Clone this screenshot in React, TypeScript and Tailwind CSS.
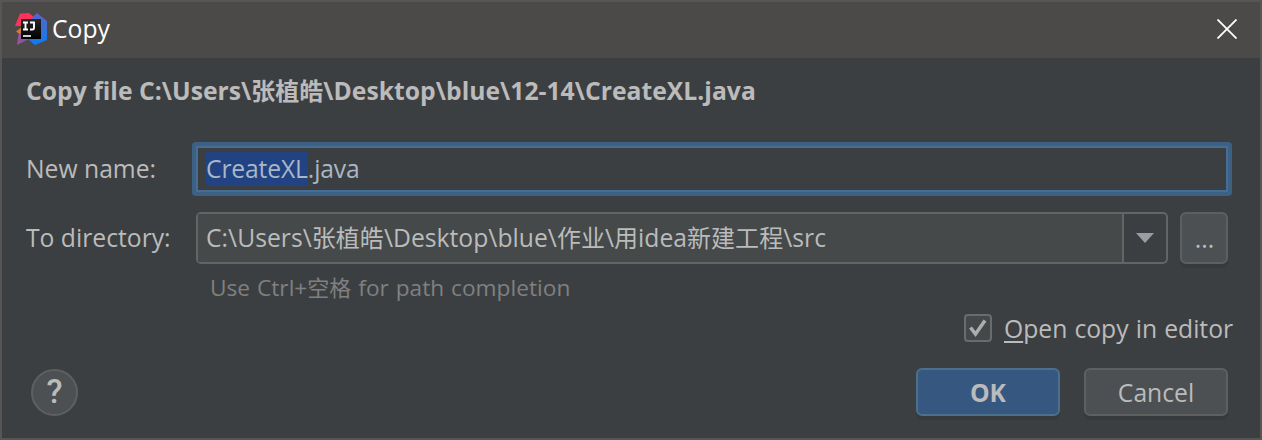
import React from "react";

const Logo = () => (
  <svg width="32" height="32" viewBox="0 0 32 32" className="shrink-0">
    <defs>
      <linearGradient id="blue" x1="0" y1="0" x2="0" y2="1">
        <stop offset="0" stopColor="#5a62cc" />
        <stop offset="0.45" stopColor="#3b70d2" />
        <stop offset="1" stopColor="#087cfa" />
      </linearGradient>
      <linearGradient id="violet" x1="0" y1="0" x2="1" y2="0">
        <stop offset="0" stopColor="#a0509a" />
        <stop offset="1" stopColor="#6a5fae" />
      </linearGradient>
      <linearGradient id="black" x1="0" y1="0" x2="0" y2="1">
        <stop offset="0" stopColor="#262626" />
        <stop offset="1" stopColor="#000" />
      </linearGradient>
    </defs>
    <path d="M7 14 1 18.500l6 4.500Z" fill="#d9772c" />
    <path d="M3.500 21 2 32l13-6.500V16Z" fill="url(#violet)" />
    <path d="M5 .5 14 0l6 5v8H0Z" fill="#fe315d" />
    <path d="M22 0 32 8v19l-12 5-6-5V8Z" fill="url(#blue)" />
    <rect x="6" y="6" width="20" height="20" fill="url(#black)" />
    <path d="M8 9.500h5M10.500 9.500v7M8 16.500h5M15 9.500h4v5.200q0 1.800-1.800 1.800H15" stroke="#fff" strokeWidth="1.900" fill="none" />
    <path d="M8 23h8" stroke="#fff" strokeWidth="1.600" />
  </svg>
);

const App = () => (
  <main className="flex h-[440px] w-[1262px] flex-col border-2 border-[#575654] bg-[#3c3f41] font-['Open_Sans','Noto_Sans_CJK_SC',sans-serif] text-[24.700px] leading-[32px] whitespace-nowrap text-[#bbbbbb]">
    <header className="flex h-[56px] shrink-0 items-center bg-[#4b4a48] pr-[23px] pb-[2px] pl-[13px]">
      <Logo />
      <h1 className="ml-[5px] text-white">Copy</h1>
      <svg width="20" height="20" viewBox="0 0 20 20" className="ml-auto" stroke="#fff" strokeWidth="1.800">
        <path d="M.5.500 19.500 19.500M19.500.500.500 19.500" />
      </svg>
    </header>
    <p className="mt-[17px] ml-[24px] h-[32px] font-bold tracking-[0.020px]">
      Copy file C:\Users\<span className="text-[24px]">张植皓</span>\Desktop\blue\12-14\CreateXL.java
    </p>
    <div className="mt-[35px] flex h-[54px] shrink-0 items-center pl-[24px]">
      <label className="w-[166px]">New name:</label>
      <div className="h-[54px] w-[1040px] rounded-[4px] bg-[#3d6185] p-[4px]">
        <div className="flex h-[46px] items-center border-2 border-[#466d94] bg-[#3c3f41] pl-[8px] tracking-[-0.150px] text-[#a9b7c6]">
          <span className="flex h-[34px] items-center bg-[#214283]">CreateXL</span>
          <span>.java</span>
        </div>
      </div>
    </div>
    <div className="mt-[16px] flex h-[52px] shrink-0 items-center pl-[24px]">
      <label className="w-[170px] pb-[1px]">To directory:</label>
      <div className="flex h-[52px] w-[972px] rounded-[5px] border-2 border-[#646464]">
        <div className="flex flex-1 items-center bg-[#45494a] pb-[1px] pl-[8px] tracking-[0.020px]">
          <span>
            C:\Users\<span className="text-[24px]">张植皓</span>\Desktop\blue\<span className="text-[24px]">作业</span>\<span className="text-[24px]">用</span>idea<span className="text-[24px]">新建工程</span>\src
          </span>
        </div>
        <div className="flex w-[44px] items-center justify-center border-l-2 border-[#646464]">
          <svg width="18" height="10" viewBox="0 0 18 10"><path d="M0 0h18L9 10Z" fill="#9a9da1" /></svg>
        </div>
      </div>
      <button className="ml-[12px] flex h-[52px] w-[48px] items-center justify-center rounded-[6px] border-2 border-[#5e6060] bg-[#4c5052] pt-[2px] pl-[1px] shadow-[0_4px_0_#37393a]">...</button>
    </div>
    <p className="mt-[7px] ml-[208px] h-[32px] text-[22.700px] [word-spacing:1px] text-[#808080]">
      Use Ctrl+<span className="text-[22px]">空格</span> for path completion
    </p>
    <div className="mt-[9px] flex h-[32px] shrink-0 items-center pl-[962px]">
      <svg width="28" height="28" viewBox="0 0 28 28">
        <rect x="1" y="1" width="26" height="26" rx="3" fill="#43494a" stroke="#6b6b6b" strokeWidth="2" />
        <path d="m6.500 13.500 5 6.500L21 6.500" fill="none" stroke="#adadad" strokeWidth="3.500" />
      </svg>
      <label className="ml-[12px] pt-[2px] [word-spacing:0.700px]">
        <span className="underline decoration-2 underline-offset-[3px] [text-decoration-skip-ink:none]">O</span>pen copy in editor
      </label>
    </div>
    <footer className="mt-[24px] flex h-[48px] shrink-0 items-center pr-[32px] pl-[29px]">
      <button className="flex h-[47px] w-[47px] items-center justify-center rounded-full border-2 border-[#5e6060] bg-[#4c5052] font-[Roboto,sans-serif] text-[33px] font-medium">?</button>
      <button className="ml-auto flex h-[48px] w-[144px] items-center justify-center rounded-[6px] border-2 border-[#4c708c] bg-[#365880] pt-[2px] font-bold shadow-[0_4px_0_#37393a]">OK</button>
      <button className="ml-[24px] flex h-[48px] w-[144px] items-center justify-center rounded-[6px] border-2 border-[#5e6060] bg-[#4c5052] pt-[2px] shadow-[0_4px_0_#37393a]">Cancel</button>
    </footer>
  </main>
);

export default App;
